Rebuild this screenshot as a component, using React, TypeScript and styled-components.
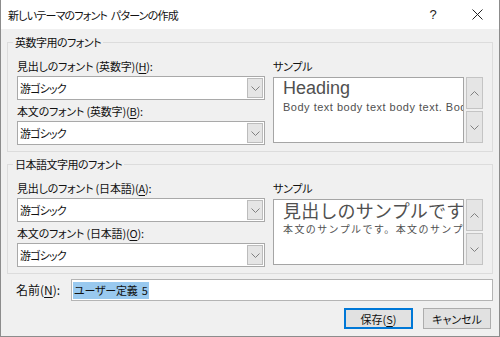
import React from 'react';
import styled, { createGlobalStyle } from 'styled-components';

const GlobalStyle = createGlobalStyle`
  html, body {
    margin: 0;
    padding: 0;
    background: #ffffff;
  }
  body {
    font-family: "Noto Sans CJK JP", "Noto Sans", sans-serif;
    font-feature-settings: "palt";
    color: #111;
  }
`;

const Chevron: React.FC<{ up?: boolean }> = ({ up }) => (
  <svg width="9" height="5" viewBox="0 0 9 5">
    <polyline
      points={up ? '0.5,4.5 4.5,0.5 8.5,4.5' : '0.5,0.5 4.5,4.5 8.5,0.5'}
      fill="none"
      stroke="#808080"
      strokeWidth="1"
    />
  </svg>
);

const Mn: React.FC<{ k: string }> = ({ k }) => <u>{k}</u>;

const ComboBox: React.FC<{ value: string }> = ({ value }) => (
  <Combo>
    <ComboText>{value}</ComboText>
    <ComboButton>
      <Chevron />
    </ComboButton>
  </Combo>
);

interface SampleProps {
  heading: string;
  body: string;
  jp?: boolean;
}

const Sample: React.FC<SampleProps> = ({ heading, body, jp }) => (
  <SampleRow>
    <SampleBox>
      <SampleHeading $jp={jp}>{heading}</SampleHeading>
      <SampleBody $jp={jp}>{body}</SampleBody>
    </SampleBox>
    <ScrollCol>
      <ScrollButton>
        <Chevron up />
      </ScrollButton>
      <ScrollButton>
        <Chevron />
      </ScrollButton>
    </ScrollCol>
  </SampleRow>
);

const App: React.FC = () => {
  return (
    <>
      <GlobalStyle />
      <Window>
        <TitleBar>
          <Title>新しいテーマのフォント パターンの作成</Title>
          <TitleButton>?</TitleButton>
          <TitleButton>
            <svg width="11" height="11" viewBox="0 0 11 11">
              <path d="M0.5 0.5 L10.5 10.5 M10.5 0.5 L0.5 10.5" stroke="#222" strokeWidth="1" />
            </svg>
          </TitleButton>
        </TitleBar>
        <Body>
          <Group>
            <Legend>英数字用のフォント</Legend>
            <GroupGrid>
              <Column>
                <Label>
                  見出しのフォント (英数字)(<Mn k="H" />):
                </Label>
                <ComboBox value="游ゴシック" />
                <Label $spaced>
                  本文のフォント (英数字)(<Mn k="B" />):
                </Label>
                <ComboBox value="游ゴシック" />
              </Column>
              <Column>
                <Label>サンプル</Label>
                <Sample heading="Heading" body="Body text body text body text. Body text body text." />
              </Column>
            </GroupGrid>
          </Group>
          <Group $second>
            <Legend>日本語文字用のフォント</Legend>
            <GroupGrid>
              <Column>
                <Label>
                  見出しのフォント (日本語)(<Mn k="A" />):
                </Label>
                <ComboBox value="游ゴシック" />
                <Label $spaced>
                  本文のフォント (日本語)(<Mn k="O" />):
                </Label>
                <ComboBox value="游ゴシック" />
              </Column>
              <Column>
                <Label>サンプル</Label>
                <Sample jp heading="見出しのサンプルです。" body="本文のサンプルです。本文のサンプルです。" />
              </Column>
            </GroupGrid>
          </Group>
          <NameRow>
            <NameLabel>
              名前(<Mn k="N" />):
            </NameLabel>
            <NameInput>
              <Selected>ユーザー定義 5</Selected>
            </NameInput>
          </NameRow>
          <ButtonRow>
            <DialogButton $primary>
              保存(<Mn k="S" />)
            </DialogButton>
            <DialogButton>キャンセル</DialogButton>
          </ButtonRow>
        </Body>
      </Window>
    </>
  );
};

const Window = styled.div`
  width: 500px;
  height: 337px;
  box-sizing: border-box;
  border: 1px solid #8c8c8c;
  border-top: none;
  background: #f0f0f0;
  display: flex;
  flex-direction: column;
  overflow: hidden;
`;

const TitleBar = styled.div`
  height: 29px;
  background: #ffffff;
  display: flex;
  align-items: center;
  padding-left: 7px;
  flex-shrink: 0;
`;

const Title = styled.div`
  flex: 1;
  font-size: 11px;
  letter-spacing: -0.8px;
  word-spacing: 2px;
  line-height: 16px;
`;

const TitleButton = styled.div`
  width: 44px;
  height: 29px;
  display: flex;
  align-items: center;
  justify-content: center;
  font-family: "Liberation Sans", sans-serif;
  font-size: 13px;
  color: #222;
`;

const Body = styled.div`
  padding: 5px 6px 0 6px;
  display: flex;
  flex-direction: column;
`;

const Group = styled.fieldset<{ $second?: boolean }>`
  margin: ${(p) => (p.$second ? '4px' : '0')} 0 0 0;
  border: 1px solid #dcdcdc;
  padding: 8px 9px 6px 9px;
  min-width: 0;
`;

const Legend = styled.legend`
  margin-left: -4px;
  padding: 0 2px;
  font-size: 11px;
  letter-spacing: -0.5px;
  line-height: 16px;
`;

const GroupGrid = styled.div`
  display: grid;
  grid-template-columns: 248px 1fr;
  column-gap: 8px;
`;

const Column = styled.div`
  display: flex;
  flex-direction: column;
  min-width: 0;
`;

const Label = styled.div<{ $spaced?: boolean }>`
  font-size: 11px;
  letter-spacing: -0.2px;
  line-height: 16px;
  height: 16px;
  margin-top: ${(p) => (p.$spaced ? '3px' : '0')};
  white-space: nowrap;

  u {
    text-underline-offset: 2px;
  }
`;

const Combo = styled.div`
  margin-top: 2px;
  height: 24px;
  box-sizing: border-box;
  border: 1px solid #a9a9a9;
  background: #ffffff;
  display: flex;
  align-items: stretch;
`;

const ComboText = styled.div`
  flex: 1;
  padding-left: 2px;
  font-size: 11px;
  letter-spacing: -0.8px;
  line-height: 22px;
`;

const ComboButton = styled.div`
  width: 16px;
  margin: 1px;
  box-sizing: border-box;
  border: 1px solid #bcbcbc;
  background: #e5e5e5;
  display: flex;
  align-items: center;
  justify-content: center;
`;

const SampleRow = styled.div`
  margin-top: 3px;
  height: 66px;
  display: flex;
  gap: 2px;
`;

const SampleBox = styled.div`
  flex: 1;
  min-width: 0;
  box-sizing: border-box;
  border: 1px solid #a5a5a5;
  background: #ffffff;
  padding: 0 0 0 9px;
  overflow: hidden;
  white-space: nowrap;
`;

const SampleHeading = styled.div<{ $jp?: boolean }>`
  font-family: ${(p) => (p.$jp ? '"Noto Sans CJK JP", sans-serif' : '"Liberation Sans", sans-serif')};
  font-feature-settings: normal;
  font-size: 18px;
  letter-spacing: ${(p) => (p.$jp ? '0.2px' : '0')};
  line-height: 21px;
  color: #505050;
  overflow: hidden;
`;

const SampleBody = styled.div<{ $jp?: boolean }>`
  font-family: ${(p) => (p.$jp ? '"Noto Sans CJK JP", sans-serif' : '"Liberation Sans", sans-serif')};
  font-feature-settings: normal;
  font-size: ${(p) => (p.$jp ? '10px' : '11px')};
  letter-spacing: ${(p) => (p.$jp ? '1.4px' : '0.5px')};
  line-height: 14px;
  margin-top: 1px;
  color: #505050;
  overflow: hidden;
`;

const ScrollCol = styled.div`
  width: 17px;
  display: flex;
  flex-direction: column;
  gap: 2px;
`;

const ScrollButton = styled.div`
  flex: 1;
  box-sizing: border-box;
  border: 1px solid #c4c4c4;
  background: #e5e5e5;
  display: flex;
  align-items: center;
  justify-content: center;
`;

const NameRow = styled.div`
  margin-top: 5px;
  display: flex;
  align-items: center;
`;

const NameLabel = styled.div`
  width: 64px;
  box-sizing: border-box;
  padding-left: 9px;
  font-size: 12px;
  line-height: 16px;

  u {
    text-underline-offset: 2px;
  }
`;

const NameInput = styled.div`
  flex: 1;
  height: 22px;
  box-sizing: border-box;
  border: 1px solid #b4b4b4;
  background: #ffffff;
  padding-left: 1px;
  display: flex;
  align-items: center;
  font-size: 11px;
  letter-spacing: -0.2px;
  word-spacing: 2px;
`;

const Selected = styled.span`
  background: #99c9ef;
  line-height: 17px;
  padding: 0 1px;
`;

const ButtonRow = styled.div`
  margin-top: 7px;
  padding-right: 2px;
  display: flex;
  justify-content: flex-end;
  gap: 10px;
`;

const DialogButton = styled.div<{ $primary?: boolean }>`
  width: ${(p) => (p.$primary ? '69px' : '68px')};
  height: 21px;
  box-sizing: border-box;
  border: 1px solid ${(p) => (p.$primary ? '#0078d7' : '#adadad')};
  box-shadow: ${(p) => (p.$primary ? 'inset 0 0 0 1px #0078d7' : 'none')};
  background: #e1e1e1;
  display: flex;
  align-items: center;
  justify-content: center;
  font-size: 11px;

  u {
    text-underline-offset: 2px;
  }
`;

export default App;
